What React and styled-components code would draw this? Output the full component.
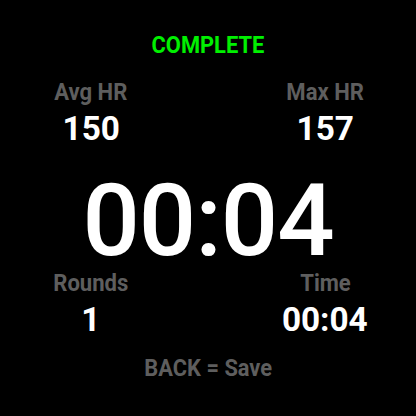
import styled, { createGlobalStyle } from "styled-components";

const GlobalStyle = createGlobalStyle`
  html, body {
    margin: 0;
    padding: 0;
    background: #000;
  }
  body {
    font-family: Roboto, "Liberation Sans", sans-serif;
  }
`;

const Screen = styled.div`
  width: 416px;
  height: 416px;
  background: #000;
  display: flex;
  flex-direction: column;
  align-items: center;
  box-sizing: border-box;
  padding-top: 33px;
`;

const Status = styled.div`
  font-size: 24px;
  line-height: 24px;
  font-weight: 700;
  color: #00f000;
  transform: scaleX(0.91);
`;

const StatRow = styled.div`
  width: 100%;
  display: grid;
  grid-template-columns: 1fr 1fr;
  padding: 0 56px;
  box-sizing: border-box;
  margin-top: ${({ $gap }) => $gap}px;
`;

const Stat = styled.div`
  display: flex;
  flex-direction: column;
  align-items: ${({ $right }) => ($right ? "flex-end" : "flex-start")};
`;

const StatInner = styled.div`
  width: 70px;
  display: flex;
  flex-direction: column;
  align-items: center;
`;

const Label = styled.div`
  font-size: 24px;
  line-height: 24px;
  font-weight: 700;
  color: #5e5e5e;
  white-space: nowrap;
  transform: scaleX(0.92);
`;

const Value = styled.div`
  margin-top: 7px;
  font-size: 34px;
  line-height: 34px;
  font-weight: 700;
  color: #fff;
  white-space: nowrap;
  transform: scaleX(0.98);
`;

const Timer = styled.div`
  margin-top: 28px;
  font-size: 101px;
  line-height: 96px;
  font-weight: 500;
  color: #fff;
  letter-spacing: -1px;
`;

const Hint = styled.div`
  margin-top: 22px;
  font-size: 23px;
  line-height: 22px;
  font-weight: 700;
  color: #5e5e5e;
  transform: scaleX(0.95);
`;

const stats = {
  top: [
    { label: "Avg HR", value: "150" },
    { label: "Max HR", value: "157" },
  ],
  bottom: [
    { label: "Rounds", value: "1" },
    { label: "Time", value: "00:04" },
  ],
};

const StatPair = ({ items, gap }) => (
  <StatRow $gap={gap}>
    {items.map((s, i) => (
      <Stat key={s.label} $right={i === 1}>
        <StatInner>
          <Label>{s.label}</Label>
          <Value>{s.value}</Value>
        </StatInner>
      </Stat>
    ))}
  </StatRow>
);

export default function App() {
  return (
    <>
      <GlobalStyle />
      <Screen>
        <Status>COMPLETE</Status>
        <StatPair items={stats.top} gap={23} />
        <Timer>00:04</Timer>
        <StatPair items={stats.bottom} gap={2} />
        <Hint>BACK = Save</Hint>
      </Screen>
    </>
  );
}
